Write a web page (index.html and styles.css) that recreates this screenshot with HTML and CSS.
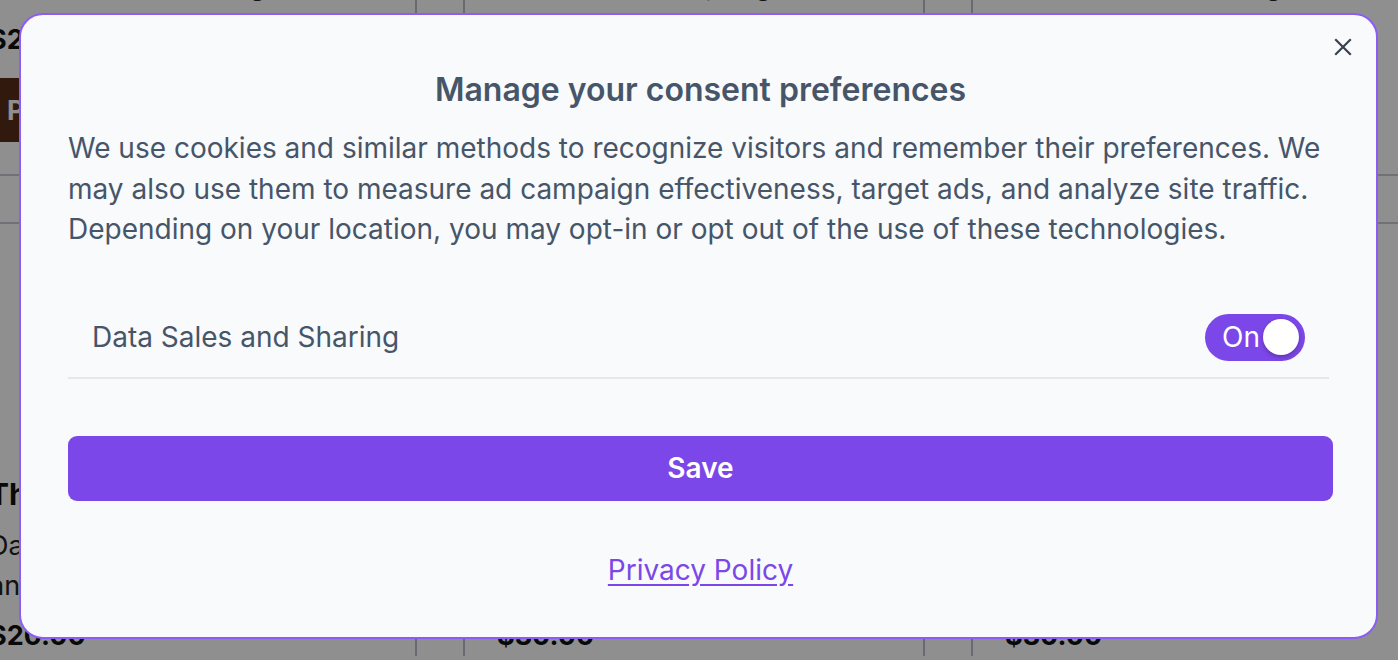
FILE: index.html
```html
<!DOCTYPE html>
<html lang="en">
<head>
<meta charset="utf-8">
<title>Consent</title>
<link rel="stylesheet" href="styles.css">
</head>
<body>
<div class="page">
  <div class="card">
    <p class="card-meta">Handcrafted artisan goods</p>
    <p class="card-price-top">$20.00</p>
    <button class="card-btn">Purchase</button>
    <div class="card-qty"></div>
    <div class="card-img"></div>
    <h3 class="card-title">The Classic</h3>
    <p class="card-desc">Daily essentials made<br>and shipped with care</p>
    <p class="card-price">$20.00</p>
  </div>
  <div class="card">
    <p class="card-meta">Best seller this spring</p>
    <p class="card-price-top">$30.00</p>
    <button class="card-btn">Purchase</button>
    <div class="card-qty"></div>
    <div class="card-img"></div>
    <h3 class="card-title">The Deluxe</h3>
    <p class="card-desc">Daily essentials made<br>and shipped with care</p>
    <p class="card-price">$30.00</p>
  </div>
  <div class="card">
    <p class="card-meta">Handcrafted artisan goods</p>
    <p class="card-price-top">$30.00</p>
    <button class="card-btn">Purchase</button>
    <div class="card-qty"></div>
    <div class="card-img"></div>
    <h3 class="card-title">The Premium</h3>
    <p class="card-desc">Daily essentials made<br>and shipped with care</p>
    <p class="card-price">$30.00</p>
  </div>
</div>

<div class="overlay"></div>

<div class="modal" role="dialog">
  <button class="close" aria-label="Close">
    <svg width="18" height="18" viewBox="0 0 18 18"><path d="M2 2 L16 16 M16 2 L2 16" stroke="#374151" stroke-width="2.2" stroke-linecap="square" fill="none"/></svg>
  </button>
  <h2 class="title">Manage your consent preferences</h2>
  <p class="intro">We use cookies and similar methods to recognize visitors and remember their preferences. We may also use them to measure ad campaign effectiveness, target ads, and analyze site traffic. Depending on your location, you may opt-in or opt out of the use of these technologies.</p>
  <div class="pref-row">
    <span class="pref-label">Data Sales and Sharing</span>
    <span class="toggle"><span class="toggle-text">On</span><span class="knob"></span></span>
  </div>
  <button class="save">Save</button>
  <a class="privacy" href="#">Privacy Policy</a>
</div>
</body>
</html>
```
FILE: styles.css
```css
* { box-sizing: border-box; }
html, body { margin: 0; padding: 0; }
body {
  width: 1398px;
  height: 660px;
  overflow: hidden;
  background: #ffffff;
  font-family: Inter, "Liberation Sans", sans-serif;
  color: #111111;
}

.page {
  display: flex;
  gap: 46px;
  margin-left: -45px;
  margin-top: -34px;
}
.card {
  width: 462px;
  flex: none;
  border-left: 2px solid #b9bec8;
  border-right: 2px solid #b9bec8;
}
.card > * { margin-left: 32px; }
.card-meta {
  margin-top: 0;
  margin-bottom: 0;
  font-size: 27px;
  line-height: 40px;
  color: #222;
}
.card-price-top {
  margin: 14px 0 0 32px;
  font-size: 27px;
  font-weight: 700;
  line-height: 40px;
}
.card-btn {
  display: block;
  margin-top: 18px;
  width: 360px;
  height: 64px;
  border: none;
  border-radius: 4px;
  background: #5a2d18;
  color: #ffffff;
  font-family: inherit;
  font-size: 27px;
  font-weight: 700;
  text-align: left;
  padding-left: 18px;
}
.card-qty {
  margin: 32px 0 0 0;
  height: 50px;
  border-top: 2px solid #c4c9d2;
  border-bottom: 2px solid #c4c9d2;
}
.card-img { height: 248px; }
.card-title {
  margin-top: 0;
  margin-bottom: 0;
  font-size: 30px;
  font-weight: 700;
  line-height: 44px;
}
.card-desc {
  margin-top: 10px;
  margin-bottom: 0;
  font-size: 27px;
  line-height: 40px;
  color: #222;
}
.card-price {
  margin-top: 10px;
  margin-bottom: 0;
  font-size: 27px;
  font-weight: 700;
  line-height: 40px;
}

.overlay {
  position: fixed;
  inset: 0;
  background: rgba(0, 0, 0, 0.44);
}

.modal {
  position: fixed;
  top: 13px;
  left: 19px;
  width: 1359px;
  height: 626px;
  background: #f8fafc;
  border: 2px solid #8b5cf6;
  border-radius: 24px;
  padding: 52px 43px 0 47px;
  display: flex;
  flex-direction: column;
  color: #475569;
}
.close {
  position: absolute;
  top: 21px;
  right: 22px;
  width: 22px;
  height: 22px;
  padding: 2px;
  border: none;
  background: transparent;
  display: flex;
  align-items: center;
  justify-content: center;
}
.title {
  margin: 0;
  text-align: center;
  font-size: 32px;
  line-height: 45px;
  font-weight: 600;
  color: #475569;
}
.intro {
  margin: 16px 0 0 0;
  font-size: 28px;
  line-height: 40.5px;
  color: #475569;
}
.pref-row {
  margin-top: 48px;
  margin-right: 4px;
  padding: 16px 24px;
  display: flex;
  align-items: center;
  justify-content: space-between;
  border-bottom: 2px solid #e5e7eb;
}
.pref-label {
  font-size: 28px;
  line-height: 40px;
  color: #475569;
}
.toggle {
  width: 100px;
  height: 47px;
  border-radius: 24px;
  background: #7b47e8;
  display: flex;
  align-items: center;
  justify-content: space-between;
  padding: 0 6px 0 17px;
}
.toggle-text {
  color: #ffffff;
  font-size: 28px;
  line-height: 1;
}
.knob {
  width: 36px;
  height: 36px;
  border-radius: 50%;
  background: #ffffff;
  box-shadow: 0 2px 4px rgba(0, 0, 0, 0.25);
}
.save {
  margin-top: 57px;
  height: 65px;
  border: none;
  border-radius: 9px;
  background: #7b47e8;
  color: #ffffff;
  font-family: inherit;
  font-size: 28px;
  font-weight: 600;
}
.privacy {
  margin-top: 49px;
  align-self: center;
  font-size: 28px;
  line-height: 40.5px;
  color: #7b47e8;
  text-decoration: underline;
  text-underline-offset: 4px;
}
```
